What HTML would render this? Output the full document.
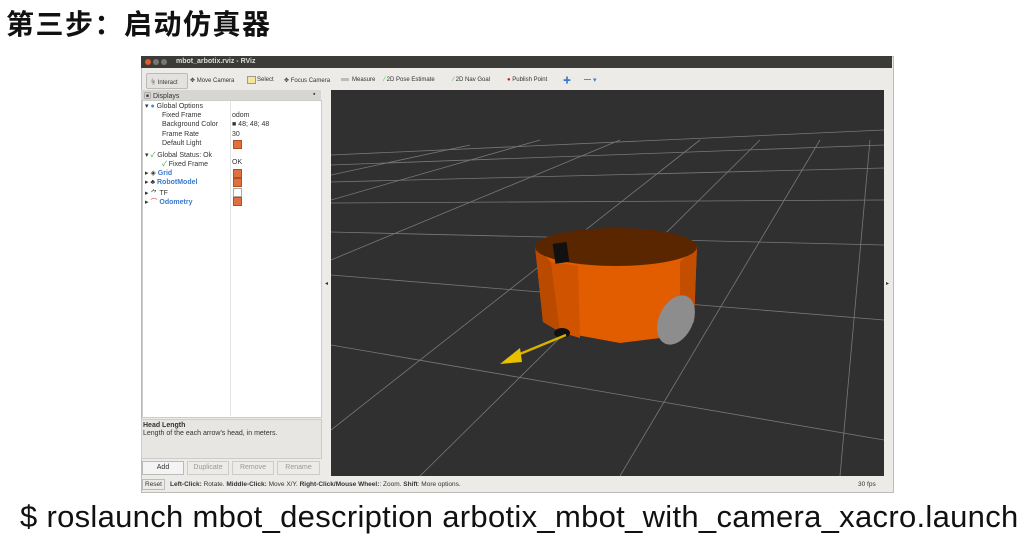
<!DOCTYPE html>
<html><head><meta charset="utf-8"><style>
body{margin:0;width:1024px;height:544px;background:#fff;position:relative;overflow:hidden;font-family:"Liberation Sans","Noto Sans CJK SC",sans-serif}
.a{position:absolute}
.t{font-size:7px;color:#333;white-space:nowrap}
.cb{position:absolute;width:7px;height:7px;background:#e07040;border:1px solid #b05020}
</style></head><body>
<div class="a" style="left:6px;top:3px;font-size:28px;letter-spacing:1.5px;font-weight:bold;color:#111;font-family:'Noto Sans CJK SC',sans-serif">第三步：启动仿真器</div>

<div class="a" style="left:141px;top:56px;width:751px;height:435px;background:#edebe8;border:1px solid #bbb"></div>
<div class="a" style="left:141px;top:56px;width:751px;height:12px;background:#3c3b37"></div>
<div class="a" style="left:145px;top:59px;width:6px;height:6px;border-radius:50%;background:#e05a2a"></div>
<div class="a" style="left:153px;top:59px;width:6px;height:6px;border-radius:50%;background:#777"></div>
<div class="a" style="left:161px;top:59px;width:6px;height:6px;border-radius:50%;background:#777"></div>
<div class="a t" style="left:176px;top:58px;color:#ddd;font-weight:bold">mbot_arbotix.rviz - RViz</div>

<div class="a" style="left:146px;top:73px;width:40px;height:14px;background:#e4e2df;border:1px solid #bbb;border-radius:2px"></div>
<div class="a t" style="left:150px;top:77px;font-size:6px">☝ Interact</div>
<div class="a t" style="left:190px;top:77px;font-size:6px">✥ Move Camera</div>
<div class="a" style="left:247px;top:76px;width:7px;height:6px;background:#f4e79a;border:1px solid #999"></div>
<div class="a t" style="left:257px;top:77px;font-size:6px">Select</div>
<div class="a t" style="left:284px;top:77px;font-size:6px">✥ Focus Camera</div>
<div class="a" style="left:341px;top:78px;width:8px;height:3px;background:#bbb"></div>
<div class="a t" style="left:352px;top:77px;font-size:6px">Measure</div>
<div class="a t" style="left:384px;top:77px;font-size:6px"><span style="color:#2c2">⁄</span> 2D Pose Estimate</div>
<div class="a t" style="left:453px;top:77px;font-size:6px"><span style="color:#2c2">⁄</span> 2D Nav Goal</div>
<div class="a t" style="left:507px;top:77px;font-size:6px"><span style="color:#c22">●</span> Publish Point</div>
<div class="a t" style="left:563px;top:75px;color:#3a7ad0;font-size:8px">✚</div>
<div class="a t" style="left:584px;top:75px;color:#3a7ad0;font-size:7px">━ ▾</div>

<div class="a" style="left:141px;top:90px;width:180px;height:10px;background:#d8d6d2"></div>
<div class="a t" style="left:144px;top:91px">▣ Displays</div>
<div class="a t" style="left:313px;top:91px">▪</div>
<div class="a" style="left:142px;top:100px;width:178px;height:316px;background:#fff;border:1px solid #ccc"></div>
<div class="a" style="left:230px;top:101px;width:1px;height:315px;background:#e4e4e4"></div>
<div class="a t" style="left:145px;top:102px">▾ <span style="color:#4a86d8">●</span> Global Options</div>
<div class="a t" style="left:162px;top:112px">Fixed Frame</div><div class="a t" style="left:232px;top:112px">odom</div>
<div class="a t" style="left:162px;top:121px">Background Color</div><div class="a t" style="left:232px;top:121px">■ 48; 48; 48</div>
<div class="a t" style="left:162px;top:131px">Frame Rate</div><div class="a t" style="left:232px;top:131px">30</div>
<div class="a t" style="left:162px;top:140px">Default Light</div><div class="cb" style="left:233px;top:140px"></div>
<div class="a t" style="left:145px;top:150px">▾ <span style="color:#393">✓</span> Global Status: Ok</div>
<div class="a t" style="left:162px;top:159px"><span style="color:#393">✓</span> Fixed Frame</div><div class="a t" style="left:232px;top:159px">OK</div>
<div class="a t" style="left:145px;top:169px">▸ ◈ <b style="color:#3a7ad0">Grid</b></div><div class="cb" style="left:233px;top:169px"></div>
<div class="a t" style="left:145px;top:178px">▸ ♣ <b style="color:#3a7ad0">RobotModel</b></div><div class="cb" style="left:233px;top:178px"></div>
<div class="a t" style="left:145px;top:188px">▸ ⺈ TF</div><div class="a" style="left:233px;top:188px;width:7px;height:7px;border:1px solid #aaa;background:#fff"></div>
<div class="a t" style="left:145px;top:197px">▸ <span style="color:#d33">⌒</span> <b style="color:#3a7ad0">Odometry</b></div><div class="cb" style="left:233px;top:197px"></div>

<div class="a" style="left:141px;top:419px;width:179px;height:38px;background:#e8e6e2;border:1px solid #ccc"></div>
<div class="a t" style="left:143px;top:422px;font-weight:bold">Head Length</div>
<div class="a t" style="left:143px;top:430px">Length of the each arrow's head, in meters.</div>
<div class="a t" style="left:142px;top:461px;width:40px;height:12px;border:1px solid #bbb;background:#f4f4f4;text-align:center;line-height:12px">Add</div>
<div class="a t" style="left:187px;top:461px;width:40px;height:12px;border:1px solid #ccc;text-align:center;line-height:12px;color:#999">Duplicate</div>
<div class="a t" style="left:232px;top:461px;width:40px;height:12px;border:1px solid #ccc;text-align:center;line-height:12px;color:#999">Remove</div>
<div class="a t" style="left:277px;top:461px;width:41px;height:12px;border:1px solid #ccc;text-align:center;line-height:12px;color:#999">Rename</div>

<div class="a t" style="left:142px;top:479px;border:1px solid #bbb;padding:1px 2px;font-size:6.5px">Reset</div>
<div class="a t" style="left:170px;top:481px;font-size:6.5px"><b>Left-Click:</b> Rotate. <b>Middle-Click:</b> Move X/Y. <b>Right-Click/Mouse Wheel:</b>: Zoom. <b>Shift</b>: More options.</div>
<div class="a t" style="left:858px;top:481px;font-size:6.5px">30 fps</div>
<div class="a t" style="left:325px;top:280px;font-size:6px">◂</div>
<div class="a t" style="left:886px;top:280px;font-size:6px">▸</div>

<svg class="a" style="left:331px;top:90px" width="553" height="386" viewBox="331 90 553 386">
<rect x="331" y="90" width="553" height="386" fill="#303030"/>
<g stroke="#8a8a8a" stroke-width="0.8" fill="none" opacity="0.8">
<line x1="331" y1="155" x2="884" y2="130"/>
<line x1="331" y1="165" x2="884" y2="145"/>
<line x1="331" y1="182" x2="884" y2="168"/>
<line x1="331" y1="203" x2="884" y2="200"/>
<line x1="331" y1="232" x2="884" y2="245"/>
<line x1="331" y1="275" x2="884" y2="320"/>
<line x1="331" y1="345" x2="884" y2="440"/>
<line x1="331" y1="430" x2="700" y2="140"/>
<line x1="420" y1="476" x2="760" y2="140"/>
<line x1="620" y1="476" x2="820" y2="140"/>
<line x1="840" y1="476" x2="870" y2="140"/>
<line x1="331" y1="260" x2="620" y2="140"/>
<line x1="331" y1="200" x2="540" y2="140"/>
<line x1="331" y1="175" x2="470" y2="145"/>
</g>
<path d="M535 246 L543 322 L560 332 L620 343 L660 338 L694 322 L697 246 Z" fill="#e25c00"/>
<path d="M535 246 L543 322 L560 332 L551 262 Z" fill="#b94a00"/>
<path d="M551 262 L560 332 L580 338 L578 266 Z" fill="#d05400"/>
<path d="M680 262 L697 246 L694 322 L680 330 Z" fill="#c34e00"/>
<ellipse cx="616" cy="247" rx="81" ry="19" fill="#5a2600"/>
<rect x="554" y="243" width="14" height="20" fill="#111" transform="rotate(-8 560 253)"/>
<ellipse cx="676" cy="320" rx="17" ry="26" fill="#8d8d8d" transform="rotate(25 676 320)"/>
<ellipse cx="562" cy="333" rx="8" ry="5" fill="#111"/>
<line x1="566" y1="335" x2="515" y2="356" stroke="#d8b000" stroke-width="2.5"/>
<path d="M500 364 L520 348 L522 362 Z" fill="#e8c000"/>
</svg>

<div class="a" style="left:20px;top:499px;font-size:31px;color:#111;white-space:nowrap;letter-spacing:0.3px">$ roslaunch mbot_description arbotix_mbot_with_camera_xacro.launch</div>
</body></html>
